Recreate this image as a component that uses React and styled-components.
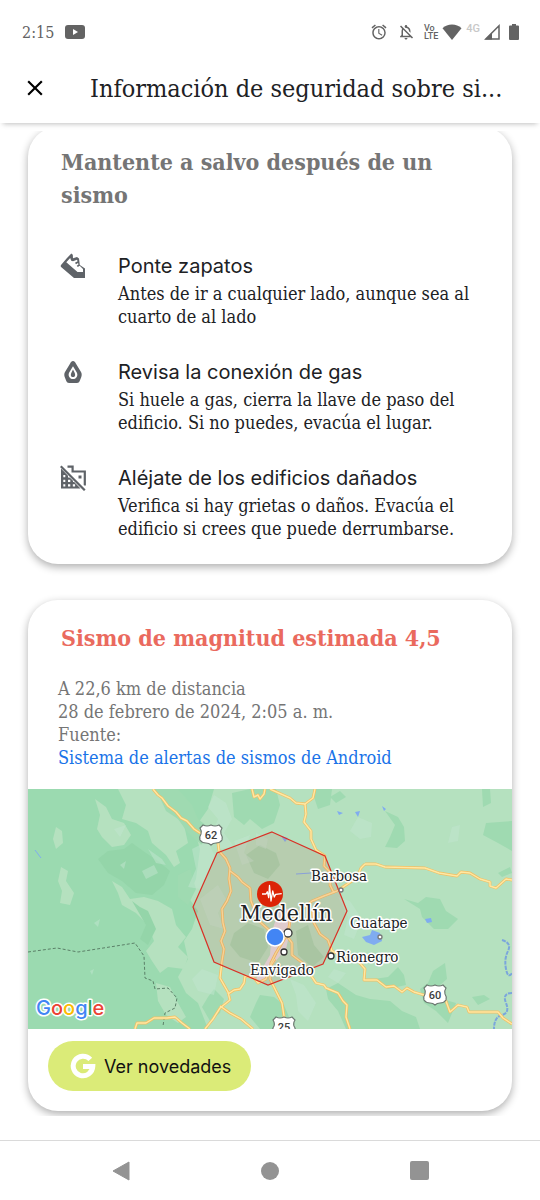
import React from 'react'
import styled, { createGlobalStyle } from 'styled-components'
import { MdAlarm, MdClose, MdOutlineNotificationsOff } from 'react-icons/md'

const slab = `'Roboto Slab', 'DejaVu Serif Condensed', 'DejaVu Serif', serif`
const sans = `'Google Sans', Inter, 'Open Sans', sans-serif`

const GlobalStyle = createGlobalStyle`
    * {
        box-sizing:border-box;
    }
    body {
        margin:0;
        background:#fff;
        font-family:${slab};
        color:#202124;
    }
    h1, h2, h3, p, ul {
        margin:0;
        padding:0;
    }
`
const Page = styled('div')`
    display:flex;
    flex-direction:column;
    min-height:100vh;
`
// status bar
const StatusBar = styled('div')`
    display:flex;
    align-items:center;
    justify-content:space-between;
    height:56px;
    padding:8px 21px 0 22px;
    color:#636363;
`
const StatusGroup = styled('div')`
    display:flex;
    align-items:center;
    gap:${props => props.$gap}px;
`
const Time = styled('span')`
    font-size:16px;
`
const Volte = styled('span')`
    font-family:Roboto, sans-serif;
    font-size:9px;
    line-height:8px;
    font-weight:500;
`
const Network = styled('span')`
    font-family:Roboto, sans-serif;
    font-size:11px;
    font-weight:500;
    color:#c8c8c8;
    padding-bottom:8px;
`
// app header
const Header = styled('header')`
    display:flex;
    align-items:center;
    gap:42px;
    height:67px;
    padding:0 28px 3px 22px;
    background:#fff;
    box-shadow:0 4px 5px -3px rgba(0,0,0,.25);
`
const IconButton = styled('button')`
    display:flex;
    align-items:center;
    justify-content:center;
    padding:0;
    border:0;
    background:transparent;
    color:${props => props.$color || '#000'};
    cursor:pointer;
`
const Title = styled('h1')`
    font-size:25px;
    font-weight:400;
    white-space:nowrap;
`
// cards
const Main = styled('main')`
    display:flex;
    flex-direction:column;
    gap:36px;
    margin-top:8px;
    padding:0 28px 5px;
    overflow:hidden;
`
const Card = styled('section')`
    border-radius:30px;
    background:#fff;
    box-shadow:0 3px 8px rgba(0,0,0,.32);
`
const SafetyCard = styled(Card)`
    margin-top:-4px;
    padding:18px 33px 24px;
`
const QuakeCard = styled(Card)`
    padding:21px 0 20px;
`
const CardTitle = styled('h2')`
    font-size:23px;
    line-height:33px;
    font-weight:700;
    color:${props => props.$alert ? '#ea6a5e' : '#757575'};
`
const QuakeTitle = styled(CardTitle)`
    padding:0 33px;
`
const Tips = styled('ul')`
    display:flex;
    flex-direction:column;
    gap:28px;
    margin-top:39px;
    list-style:none;
`
const Tip = styled('li')`
    display:grid;
    grid-template-columns:24px 1fr;
    column-gap:33px;
`
const TipIcon = styled('div')`
    display:flex;
    align-items:center;
    justify-content:center;
    height:32px;
    color:#5f6368;
    svg {
        flex-shrink:0;
    }
`
const TipTitle = styled('h3')`
    font-family:${sans};
    font-size:20px;
    line-height:32px;
    font-weight:400;
`
const TipText = styled('p')`
    font-size:18px;
    line-height:23px;
`
const Meta = styled('div')`
    display:flex;
    flex-direction:column;
    align-items:flex-start;
    margin:23px 0 20px;
    padding:0 30px;
    font-size:18px;
    line-height:23px;
    color:#757575;
`
const SourceLink = styled('a')`
    color:#1a73e8;
    text-decoration:none;
`
const MapSvg = styled('svg')`
    display:block;
    width:100%;
    height:auto;
`
const MapLabel = styled('text')`
    font-family:${slab};
    font-size:${props => props.$big ? 23 : 15}px;
    fill:#202124;
    stroke:#fff;
    stroke-width:3px;
    stroke-linejoin:round;
    paint-order:stroke;
`
const ShieldText = styled('text')`
    font-family:Roboto, sans-serif;
    font-size:11px;
    font-weight:500;
    fill:#3c3c3c;
    text-anchor:middle;
`
const Brand = styled('text')`
    font-family:${sans};
    font-size:20px;
    font-weight:500;
    stroke:#fff;
    stroke-width:3px;
    stroke-linejoin:round;
    paint-order:stroke;
`
const NewsButton = styled('button')`
    display:flex;
    align-items:center;
    gap:8px;
    height:50px;
    margin:12px 0 0 20px;
    padding:0 20px 0 22px;
    border:0;
    border-radius:25px;
    background:#dbeb78;
    color:#111;
    font-family:${sans};
    font-size:18px;
    font-weight:400;
    cursor:pointer;
`
// system navigation
const NavBar = styled('nav')`
    display:grid;
    grid-template-columns:repeat(3, 1fr);
    height:60px;
    margin-top:auto;
    padding:0 46px;
    border-top:1px solid #dadada;
`

const YoutubeIcon = () => (
    <svg width="20" height="14" viewBox="0 0 20 14">
        <rect width="20" height="14" rx="3" fill="#636363" />
        <path d="M8 4l5 3-5 3z" fill="#fff" />
    </svg>
)

const WifiIcon = () => (
    <svg width="20" height="16" viewBox="0 0 20 16">
        <path d="M10 16L0.5 4.2Q4.5 0.5 10 0.5t9.500 3.700z" fill="#636363" />
    </svg>
)

const SignalIcon = () => (
    <svg width="16" height="16" viewBox="0 0 16 16">
        <path d="M15 1.800V15H1.800z" fill="none" stroke="#636363" strokeWidth="1.500" />
        <path d="M8 8.500V15.500H1z" fill="#636363" />
    </svg>
)

const BatteryIcon = () => (
    <svg width="10" height="16" viewBox="0 0 10 16">
        <path d="M3 0h4v1.500h2a1 1 0 0 1 1 1V15a1 1 0 0 1-1 1H1a1 1 0 0 1-1-1V2.500a1 1 0 0 1 1-1h2z" fill="#636363" />
    </svg>
)

const ShoeIcon = () => (
    <svg width="26" height="26" viewBox="0 0 26 26">
        <path d="M.8 12.300L7 5 11.300.6l1.500 1.200.2 3.500 4-1.300 2 1.500.8 6.500 5.200 3.500V25H14L.8 13.800z" fill="currentColor" />
        <path d="M6.300 9.200L10.200 5l1 2.700 1.800.5 4-1.500.6 1.600-2.600 1.500 1 1.400 2-1.200.5 1.500-1.700 1.300 1 1.200 1.900-1.200 3.300 3.200V19H17.500z" fill="#fff" />
    </svg>
)

const GasIcon = () => (
    <svg width="18" height="22" viewBox="0 0 18 22">
        <path d="M9 0c1.500 0 2 1 3 2.700l5 8.300c1 1.900.8 3.500.2 5.200l-1.400 3.600C15.200 21.500 14.300 22 13 22H5c-1.300 0-2.200-.5-2.800-2.200L.8 16.200C.2 14.500 0 12.900 1 11l5-8.300C7 1 7.500 0 9 0z" fill="currentColor" />
        <path d="M9 5.300l3.200 5.200c1.200 1.900 1.500 3.400.8 5-.7 1.700-2.300 2.600-4 2.600s-3.300-.9-4-2.600c-.7-1.600-.4-3.100.8-5z" fill="#fff" />
        <path d="M9 8.500l1.600 3.200c.9 1.700.8 4.400-1.600 4.400s-2.500-2.700-1.600-4.400z" fill="currentColor" />
    </svg>
)

const NoBuildingIcon = () => (
    <svg width="26" height="26" viewBox="0 0 26 26">
        <path d="M1 3.500L20.500 23.500H1z" fill="currentColor" />
        <path d="M7.500 1.700H12.600V6.500H24.800V20.500" fill="none" stroke="currentColor" strokeWidth="2.200" />
        <path d="M18.500 10.500h3v3h-3z" fill="currentColor" />
        <path d="M3.300 10h2v2.300h-2zM8 10.500h2v2H8zM3.300 14.700h2V17h-2zM8 14.700h2.300V17H8zM13 15h1.500v2H13zM3.300 19.300h2v2.200h-2zM8 19.300h2.300v2.200H8zM12.800 19.300h2.300v2.200h-2.300z" fill="#fff" />
        <path d="M2.500.2l23 23.200" stroke="#fff" strokeWidth="1.600" />
        <path d="M.8 1.300l24 24" stroke="currentColor" strokeWidth="2.200" />
    </svg>
)

const GoogleG = () => (
    <svg width="26" height="26" viewBox="0 0 26 26">
        <path d="M20.300 6.400A9.800 9.800 0 1 0 22.800 13.400H13" fill="none" stroke="#fff" strokeWidth="5" />
    </svg>
)

const tips = [
    {
        icon: <ShoeIcon />,
        title: 'Ponte zapatos',
        lines: ['Antes de ir a cualquier lado, aunque sea al', 'cuarto de al lado'],
    },
    {
        icon: <GasIcon />,
        title: 'Revisa la conexión de gas',
        lines: ['Si huele a gas, cierra la llave de paso del', 'edificio. Si no puedes, evacúa el lugar.'],
    },
    {
        icon: <NoBuildingIcon />,
        title: 'Aléjate de los edificios dañados',
        lines: ['Verifica si hay grietas o daños. Evacúa el', 'edificio si crees que puede derrumbarse.'],
    },
]

const lightLand = [
    'M186 0L180 20 166 40 172 60 168 90 160 108 170 122 164 140 156 152 160 170 150 188 158 204 170 214 180 240H484V0z',
    'M67 10L78 18 84 30 96 34 103 46 96 56 84 58 74 48 69 40 72 26z',
    'M84 92L94 98 102 110 116 108 130 112 144 120 148 136 158 148 150 158 160 168 156 180 140 178 132 184 124 172 118 162 126 152 120 136 108 124 94 116 90 104z',
    'M33 78L40 82 38 92 46 104 42 116 32 114 34 102 30 92z',
    'M28 38L34 42 35 54 28 60 25 50z',
    'M128 194L142 198 150 214 158 228 150 234 138 226 130 212z',
    'M90 0H126L140 20 156 36 160 54 148 62 152 74 146 78 138 66 124 54 120 42 108 34 94 30 98 16z',
]
const darkLand = [
    'M128 0H150L164 16 170 30 180 38 174 56 160 44 150 30 138 22z',
    'M204 4L222 0H248L252 16 246 34 234 40 222 30 216 36 206 28z',
    'M287 0H304L302 16 290 20 286 8z',
    'M357 22L370 28 376 38 377 52 369 59 357 58 362 48 367 36z',
    'M458 34L484 32V62L470 54 455 46z',
    'M454 0H462L463 14 455 18z',
    'M376 110L390 114 398 108 412 110 418 122 430 130 420 140 406 140 394 128 392 120z',
    'M405 182L417 174 419 190 412 196 414 210 428 214 420 234 408 222 396 214 392 200 400 194z',
    'M298 200L310 194 328 206 342 210 362 212 374 222 388 228 392 240H318L310 222 300 210z',
    'M232 206L246 208 256 216 266 240H232L222 228 228 214z',
    'M346 190L360 188 370 178 376 186 378 196 360 200z',
    'M470 84L482 78 484 84 474 88z',
    'M444 208L456 206 462 210 450 216z',
    'M186 200L196 210 192 224 182 232 174 218 180 208z',
    'M302 8L312 2 318 8 308 14z',
    'M150 86L162 80 168 100 160 116 150 108z',
]
const shadeLand = [
    'M70 70L80 62 96 60 104 54 118 64 130 72 142 82 136 96 124 106 108 104 94 92 80 84z',
    'M104 112L112 118 120 122 128 140 120 156 112 150 118 136z',
]
const parkLand = [
    'M218 66L232 56 248 64 252 76 240 90 226 84z',
    'M206 144L220 134 236 140 240 158 230 174 212 168 202 156z',
    'M268 142L280 136 286 156 296 168 284 178 270 166z',
]
const hazeLand = [
    'M164 60L180 52 188 70 180 84 172 100 160 98 168 80z',
    'M186 6L198 14 204 30 196 44 206 58 192 60 184 44 190 30 180 18z',
    'M330 28L344 34 343 48 332 50 322 42z',
    'M424 38L432 36 430 52 420 54z',
    'M174 180L190 186 186 206 170 202 164 190z',
    'M310 108L322 112 334 130 326 150 316 146 320 128z',
    'M306 180L318 184 310 194 300 188z',
    'M262 190L276 196 288 214 280 232 270 222 268 206z',
    'M120 60L134 70 138 76 128 74z',
    'M114 82L126 76 130 84 118 90z',
    'M86 40L98 36 92 48zM66 134L72 130 70 138zM92 76L98 72 96 80zM62 182L66 180 64 186z',
    'M206 52L222 46 216 64 226 72 214 76zM228 44L240 50 238 60 228 56z',
    'M172 110L190 96 198 110 190 124 196 140 182 136z',
]
const roads = [
    'M125 0L130 6 134 9 140 17 148 23 153 29 159 32 166 40 172 44 184 47 190 54 191 62 198 70 202 79 201 90 203 102 199 112 194 120 195 134 197 142 193 152 196 160 194 172 192 189 200 203 202 211 192 219 185 230 177 240',
    'M202 82L210 88 214 93 222 99 223 112 227 122 231 132 240 140 248 150',
    'M200 205L206 201 212 200 216 194 217 187 226 189 230 194 238 190 242 178 247 170',
    'M192 217L202 224 213 230 225 240',
    'M107 240L109 234 118 234 126 229 139 229 147 228 154 234 162 240',
    'M224 0L226 8 230 6 232 10 236 5 237 0',
    'M242 0L262 9 268 14 277 15 285 9 287 0',
    'M277 15L278 25 276 33 283 42 283 50 288 61 297 67 296 77 303 84 302 96 306 104',
    'M337 75L333 79 330 86 324 92 309 102 296 107 284 112 272 122 262 132 260 144 254 154 248 164 243 174 242 190 247 200 254 214 258 240',
    'M337 75L348 75 357 78 397 79 411 84 429 87 433 83 442 84 452 90 462 93 462 97 468 99 478 90 484 91',
    'M284 120L286 134 292 145 300 151 304 162 318 168 330 172 337 180 336 191 349 191 358 198 366 197 374 203 379 199 386 203 396 206 407 207 418 212 422 223 430 216 439 218 441 223 470 223 475 229 484 235',
    'M258 146L264 154 264 166 276 175 282 185 288 194 296 196 298 199 310 204 315 212 319 216 318 228 322 240',
]

const Shield = ({ x, y, number }) => (
    <g transform={`translate(${x} ${y})`}>
        <path d="M-8-10Q-4-8 0-10 4-8 8-10L11-7Q9-4 10-1 12 2 11 5 9 8 5 8 2 8 0 10-2 8-5 8-9 8-11 5-12 2-10-1-9-4-11-7z" fill="#fff" stroke="#6b7770" strokeWidth="1.200" />
        <ShieldText y="4">{number}</ShieldText>
    </g>
)

const Town = ({ x, y, r = 3 }) => (
    <circle cx={x} cy={y} r={r} fill="#fff" stroke={r < 3 ? '#777' : '#333'} strokeWidth="1.300" />
)

const QuakeMap = () => (
    <MapSvg viewBox="0 0 484 240" role="img" aria-label="Mapa del sismo cerca de Medellín">
        <rect width="484" height="240" fill="#9bdab0" />
        {lightLand.map((d, i) => <path key={i} d={d} fill="#b5e1bf" />)}
        {darkLand.map((d, i) => <path key={i} d={d} fill="#9fdab1" />)}
        {shadeLand.map((d, i) => <path key={i} d={d} fill="#94d5a9" />)}
        {parkLand.map((d, i) => <path key={i} d={d} fill="#a5d8b0" />)}
        {hazeLand.map((d, i) => <path key={i} d={d} fill="#c2e5cf" opacity=".5" />)}
        <path d="M252 118L266 122 262 142 258 160 246 174 236 192 228 190 242 166 244 142z" fill="#e4dfe2" />
        <g fill="#80acf0">
            <path d="M334 148L342 146 344 141 352 144 354 152 346 156 338 153z" />
            <path d="M309 22l6 2-4 2zM327 23l5-1-2 6zM354 17l4 3-2 2zM397 130l6-1 1 4-5 1zM253 47l7 2-3 4z" />
        </g>
        <path d="M7 61l6 8M268 85l15-1" stroke="#80acf0" fill="none" />
        <path d="M474 151Q484 154 480 162T478 180 484 184M484 204Q474 204 478 214T474 226 466 240" stroke="#7ba6dc" strokeWidth="2" strokeDasharray="4 1" fill="none" />
        <path d="M0 163L29 159 50 163 107 154 116 167 117 189 125 192 127 200 140 199 149 209 147 219 137 224 135 237" stroke="#5b8068" strokeDasharray="3 2" fill="none" />
        <g fill="none" strokeLinejoin="round">
            {roads.map((d, i) => <path key={i} d={d} stroke="#f3bf62" strokeWidth="2.800" />)}
            {roads.map((d, i) => <path key={i} d={d} stroke="#ffe8a3" strokeWidth="1.400" />)}
        </g>
        <path d="M244 43L297 67 319 122 295 175 240 196 186 173 165 118 189 64z" fill="#c0605a" fillOpacity=".15" stroke="#d93025" strokeWidth="1.200" />
        <Shield x={183} y={46} number="62" />
        <Shield x={407} y={206} number="60" />
        <Shield x={256} y={238} number="25" />
        <Town x={260} y={144} r={4} />
        <Town x={256} y={163} />
        <Town x={303} y={167} />
        <Town x={313} y={101} r={2} />
        <Town x={352} y={148} r={2} />
        <MapLabel x="283" y="92">Barbosa</MapLabel>
        <MapLabel x="322" y="139">Guatape</MapLabel>
        <MapLabel x="308" y="173">Rionegro</MapLabel>
        <MapLabel x="222" y="186">Envigado</MapLabel>
        <MapLabel x="212" y="132" $big>Medellín</MapLabel>
        <circle cx="242" cy="105" r="13" fill="#dc2306" />
        <path d="M234 105h4l1.300-2.300 1.400 6 .8-12.200 1.500 15.500 1.700-10 1.600 6 1.400-2.700 6-.6" fill="none" stroke="#fff" strokeWidth="1.300" strokeLinejoin="round" />
        <circle cx="247" cy="148" r="9" fill="#4285f4" stroke="#fff" strokeWidth="1.500" />
        <Brand x="8" y="226">
            <tspan fill="#4285f4">G</tspan>
            <tspan fill="#ea4335">o</tspan>
            <tspan fill="#fbbc04">o</tspan>
            <tspan fill="#4285f4">g</tspan>
            <tspan fill="#34a853">l</tspan>
            <tspan fill="#ea4335">e</tspan>
        </Brand>
    </MapSvg>
)

const App = () => {
    return (
        <>
            <GlobalStyle />
            <Page>
                <StatusBar>
                    <StatusGroup $gap={11}>
                        <Time>2:15</Time>
                        <YoutubeIcon />
                    </StatusGroup>
                    <StatusGroup $gap={4}>
                        <StatusGroup $gap={9}>
                            <MdAlarm size={18} />
                            <MdOutlineNotificationsOff size={18} />
                            <Volte>Vo<br />LTE</Volte>
                        </StatusGroup>
                        <WifiIcon />
                        <Network>4G</Network>
                        <StatusGroup $gap={9}>
                            <SignalIcon />
                            <BatteryIcon />
                        </StatusGroup>
                    </StatusGroup>
                </StatusBar>
                <Header>
                    <IconButton aria-label="Cerrar"><MdClose size={26} /></IconButton>
                    <Title>Información de seguridad sobre si...</Title>
                </Header>
                <Main>
                    <SafetyCard>
                        <CardTitle>Mantente a salvo después de un<br />sismo</CardTitle>
                        <Tips>
                            {tips.map((tip) => (
                                <Tip key={tip.title}>
                                    <TipIcon>{tip.icon}</TipIcon>
                                    <div>
                                        <TipTitle>{tip.title}</TipTitle>
                                        <TipText>{tip.lines[0]}<br />{tip.lines[1]}</TipText>
                                    </div>
                                </Tip>
                            ))}
                        </Tips>
                    </SafetyCard>
                    <QuakeCard>
                        <QuakeTitle $alert>Sismo de magnitud estimada 4,5</QuakeTitle>
                        <Meta>
                            <p>A 22,6 km de distancia</p>
                            <p>28 de febrero de 2024, 2:05 a. m.</p>
                            <p>Fuente:</p>
                            <SourceLink href="#alertas">Sistema de alertas de sismos de Android</SourceLink>
                        </Meta>
                        <QuakeMap />
                        <NewsButton><GoogleG />Ver novedades</NewsButton>
                    </QuakeCard>
                </Main>
                <NavBar>
                    <IconButton $color="#939393" aria-label="Atrás">
                        <svg width="18" height="20" viewBox="0 0 18 20"><path d="M17 1v18L1 10z" fill="currentColor" stroke="currentColor" strokeLinejoin="round" /></svg>
                    </IconButton>
                    <IconButton $color="#939393" aria-label="Inicio">
                        <svg width="18" height="18" viewBox="0 0 18 18"><circle cx="9" cy="9" r="9" fill="currentColor" /></svg>
                    </IconButton>
                    <IconButton $color="#939393" aria-label="Recientes">
                        <svg width="19" height="19" viewBox="0 0 19 19"><rect width="19" height="19" rx="2" fill="currentColor" /></svg>
                    </IconButton>
                </NavBar>
            </Page>
        </>
    )
}
export default App
